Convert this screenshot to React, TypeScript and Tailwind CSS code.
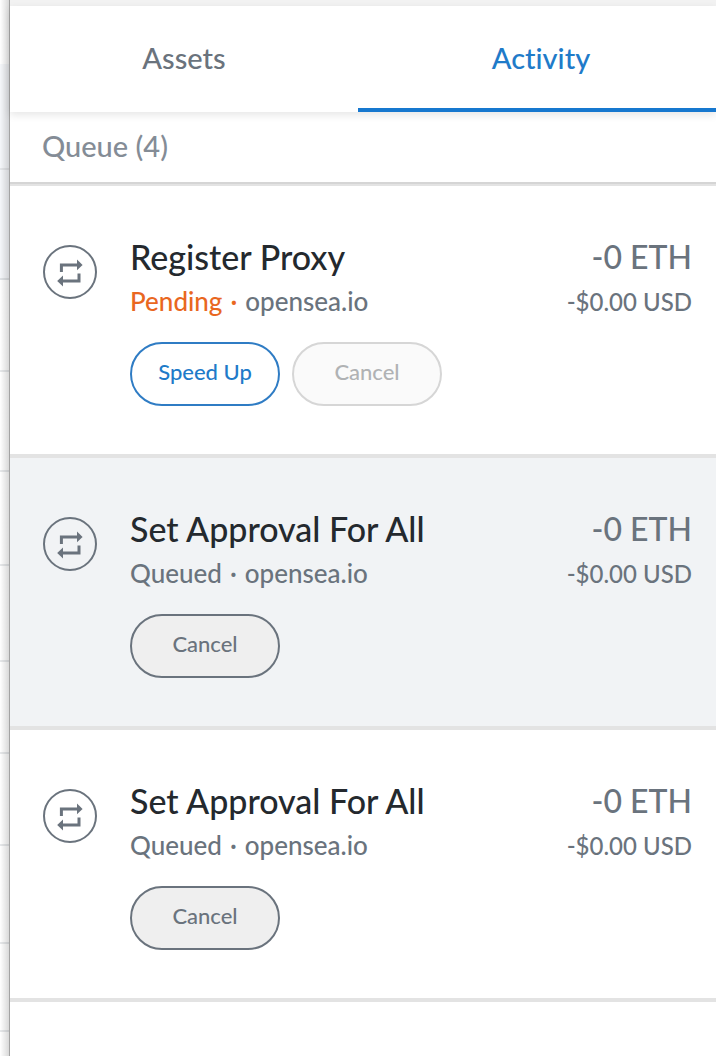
import React from 'react';

interface QueueItem {
  id: number;
  title: string;
  status: 'Pending' | 'Queued';
  origin: string;
  amount: string;
  fiat: string;
  highlighted?: boolean;
}

const items: QueueItem[] = [
  { id: 1, title: 'Register Proxy', status: 'Pending', origin: 'opensea.io', amount: '-0 ETH', fiat: '-$0.00 USD' },
  { id: 2, title: 'Set Approval For All', status: 'Queued', origin: 'opensea.io', amount: '-0 ETH', fiat: '-$0.00 USD', highlighted: true },
  { id: 3, title: 'Set Approval For All', status: 'Queued', origin: 'opensea.io', amount: '-0 ETH', fiat: '-$0.00 USD' },
];

const InteractionIcon: React.FC = () => (
  <svg viewBox="0 0 54 54" className="mt-[11px] h-[54px] w-[54px] shrink-0 text-[#6a737d]" fill="none" aria-hidden="true">
    <circle cx="27" cy="27" r="26" stroke="currentColor" strokeWidth="2" />
    <path d="M18.4 27v-7.1h17" stroke="currentColor" strokeWidth="3" />
    <path d="M34 14.6l5.6 5.3-5.6 5.3z" fill="currentColor" />
    <path d="M36 28.4v7.5H18.5" stroke="currentColor" strokeWidth="3" />
    <path d="M20 30.6L14.2 36l5.8 5.4z" fill="currentColor" />
  </svg>
);

const pill = 'h-16 w-[150px] rounded-full border-2 pb-1 text-[22px] leading-6';

const ActivityItem: React.FC<{ item: QueueItem }> = ({ item }) => {
  const pending = item.status === 'Pending';

  return (
    <li className={`flex border-b-4 border-[#e3e3e3] pt-12 pr-6 pb-12 pl-[33px] ${item.highlighted ? 'bg-[#f1f3f5]' : 'bg-white'}`}>
      <InteractionIcon />
      <div className="ml-[33px] min-w-0 flex-1">
        <h2 className="text-[34px] leading-[45px] text-[#24292e]">{item.title}</h2>
        <p className="text-[26px] leading-[45px] text-[#6a737d]">
          <span className={pending ? 'text-[#e9671f]' : ''}>
            {item.status}
            <span className="mx-2">·</span>
          </span>
          {item.origin}
        </p>
        <div className="mt-[18px] flex gap-3">
          {pending && (
            <button type="button" className={`${pill} border-[#2f7cc4] bg-white text-[#1f7bc9]`}>
              Speed Up
            </button>
          )}
          <button
            type="button"
            disabled={pending}
            className={`${pill} ${pending ? 'border-[#d6d6d6] bg-[#fafafa] text-[#b0b2b4]' : 'border-[#6a737d] bg-[#efefef] text-[#6a737d]'}`}
          >
            Cancel
          </button>
        </div>
      </div>
      <div className="shrink-0 text-right text-[#6a737d]">
        <div className="text-[32px] leading-[45px]">{item.amount}</div>
        <div className="text-[24px] leading-[45px]">{item.fiat}</div>
      </div>
    </li>
  );
};

// Sliver of the page that sits behind the popup
const PageEdge: React.FC = () => (
  <div className="flex w-[10px] shrink-0 border-r border-[#a3a3a3] bg-white" aria-hidden="true">
    <div className="relative flex-1">
      <div className="h-16" />
      <div className="h-[106px] border-b-2 border-[#e4e6e9] bg-[#f5f7fa]" />
      <div className="h-[110px] border-b-2 border-[#dfe2e5] bg-[#f5f7fa]" />
      <div className="h-[92px] border-b-2 border-[#e6e8ea]" />
      <div className="h-[100px] border-b-2 border-[#e6e8ea]" />
      <div className="h-[94px] border-b-2 border-[#e6e8ea]" />
      <div className="h-24 border-b-2 border-[#e6e8ea]" />
      <div className="h-[92px] border-b-2 border-[#e6e8ea]" />
      <div className="h-[92px] border-b-2 border-[#e6e8ea]" />
      <div className="h-[98px] border-b-2 border-[#e6e8ea]" />
      <div className="h-[88px] border-b-2 border-[#e6e8ea]" />
      <div className="absolute inset-0 bg-linear-to-r from-black/0 to-black/15" />
    </div>
  </div>
);

const App: React.FC = () => {
  return (
    <div className="flex min-h-screen bg-white font-['Lato','Liberation_Sans',sans-serif] font-medium [font-variant-ligatures:none]">
      <PageEdge />
      <main className="min-w-0 flex-1 border-t-6 border-[#f2f2f2]">
        <nav className="relative grid grid-cols-[348fr_358fr] bg-white text-[29px] leading-[34px] shadow-[0_3px_8px_rgba(0,0,0,0.1)]">
          <a href="#assets" className="flex h-[106px] items-center justify-center pb-0.5 text-[#6a737d]">
            Assets
          </a>
          <a href="#activity" aria-current="page" className="flex h-[106px] items-center justify-center border-b-4 border-[#1778cf] pt-0.5 pl-2 text-[#1f7bc9]">
            Activity
          </a>
        </nav>
        <h1 className="border-b-2 border-[#d5d5d5] px-8 pt-4 pb-[18px] text-[29px] leading-9 text-[#848c96]">Queue (4)</h1>
        <ul className="border-t-2 border-[#e3e3e3]">
          {items.map((item) => (
            <ActivityItem key={item.id} item={item} />
          ))}
        </ul>
      </main>
    </div>
  );
};

export default App;
